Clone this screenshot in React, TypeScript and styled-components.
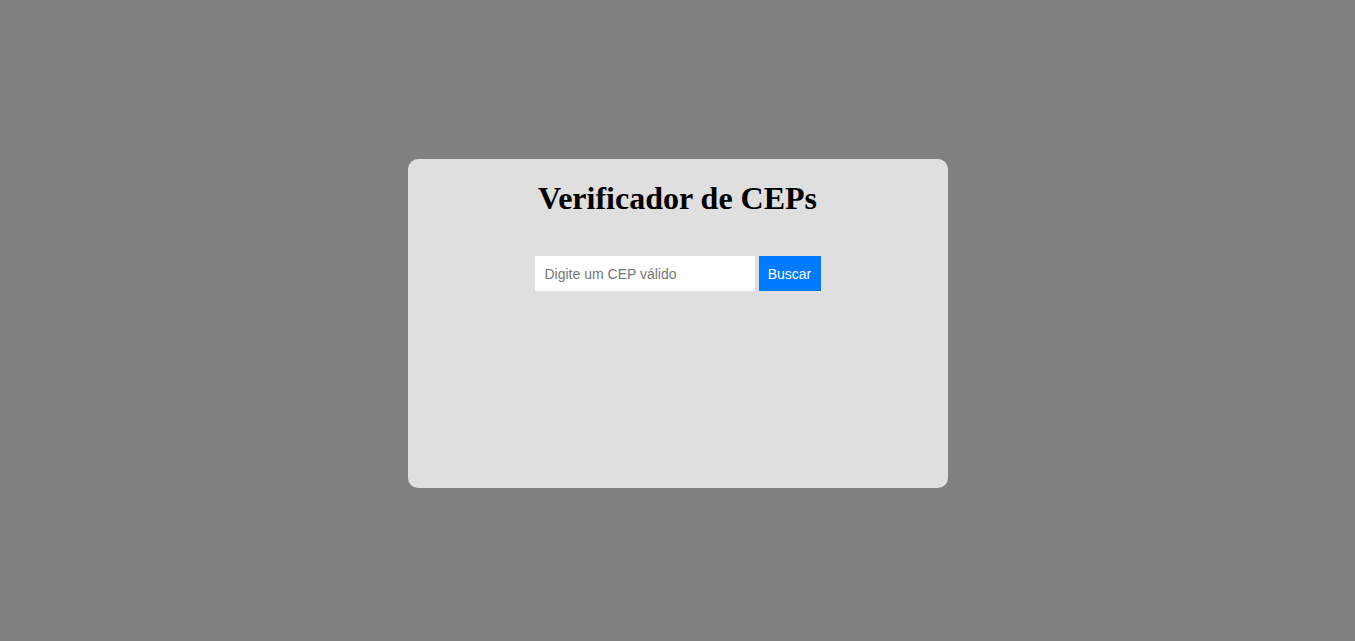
import React from "react";
import styled, { createGlobalStyle } from "styled-components";

const Global = createGlobalStyle`
  html, body { margin: 0; padding: 0; }
  body { background: #808080; font-family: "Liberation Serif", "Times New Roman", serif; }
`;

const Page = styled.main`
  width: 100%;
  height: 641px;
  display: flex;
  align-items: center;
  justify-content: center;
  background: #808080;
  padding-top: 6px;
  box-sizing: border-box;
`;

const Card = styled.section`
  width: 540px;
  height: 329px;
  box-sizing: border-box;
  background: #dfdfdf;
  border-radius: 10px;
  padding: 21px 20px;
  display: flex;
  flex-direction: column;
  align-items: center;
`;

const Title = styled.h1`
  margin: 0;
  font-family: "Liberation Serif", "Times New Roman", serif;
  font-size: 32px;
  font-weight: bold;
  color: #000;
  line-height: 37px;
`;

const Form = styled.form`
  margin-top: 39px;
  display: flex;
  gap: 4px;
`;

const Input = styled.input`
  width: 220px;
  height: 35px;
  box-sizing: border-box;
  border: none;
  outline: none;
  padding: 0 10px;
  background: #fff;
  font-family: "Liberation Sans", Arial, sans-serif;
  font-size: 14px;
  color: #333;
  &::placeholder { color: #757575; }
`;

const Button = styled.button`
  width: 62px;
  height: 35px;
  box-sizing: border-box;
  border: none;
  padding: 0;
  background: #007bff;
  color: #fff;
  font-family: "Liberation Sans", Arial, sans-serif;
  font-size: 14px;
  cursor: pointer;
`;

export default function App() {
  return (
    <>
      <Global />
      <Page>
        <Card>
          <Title>Verificador de CEPs</Title>
          <Form onSubmit={(e) => e.preventDefault()}>
            <Input type="text" placeholder="Digite um CEP válido" />
            <Button type="submit">Buscar</Button>
          </Form>
        </Card>
      </Page>
    </>
  );
}
